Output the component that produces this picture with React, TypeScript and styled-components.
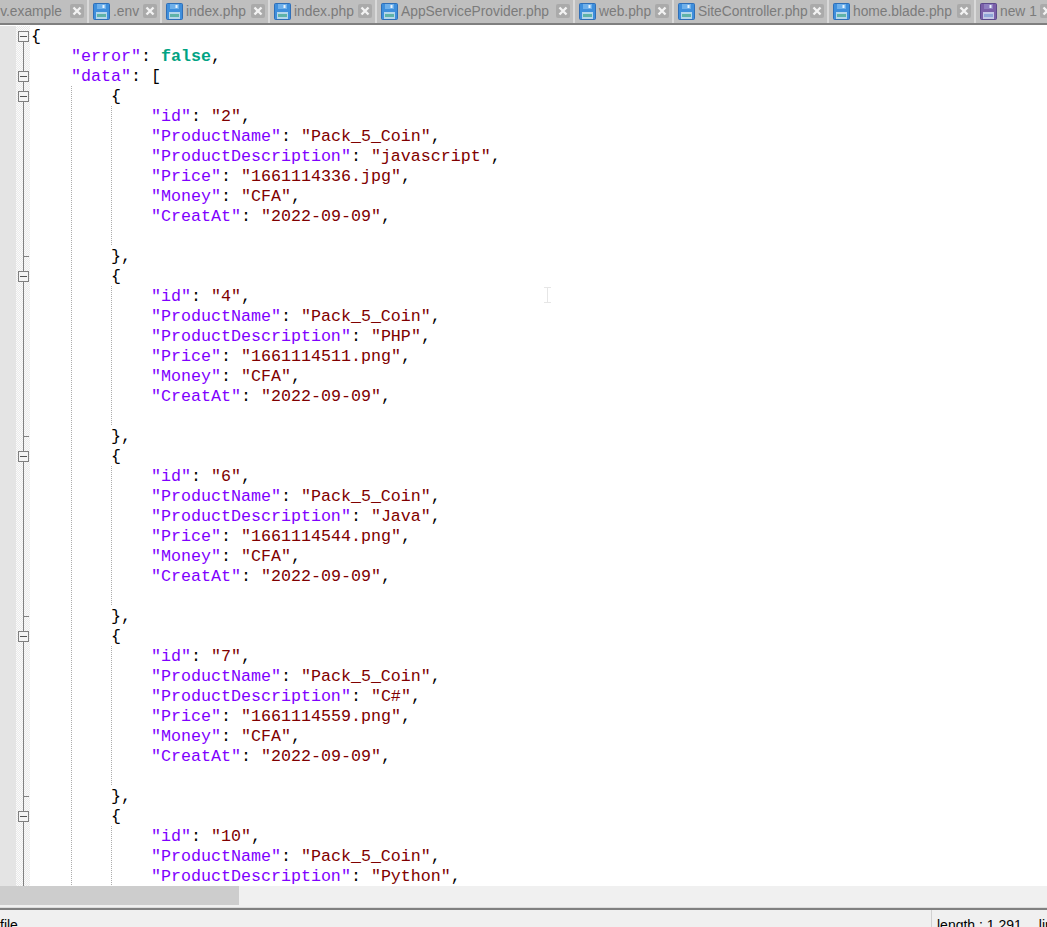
import {FC} from "react";
import styled, {createGlobalStyle} from "styled-components";

const GlobalStyle = createGlobalStyle`
	html,
	body {
		margin: 0;
		padding: 0;
		height: 100%;
		overflow: hidden;
		background: #fff;
	}
`;

const Shell = styled.div`
	display: flex;
	flex-direction: column;
	height: 927px;
	overflow: hidden;
	font-family: "Liberation Sans", Arial, sans-serif;
`;

const TabBar = styled.div`
	display: flex;
	flex: none;
	height: 23px;
	background: #bfbfbf;
	border-bottom: 2px solid #7f7f7f;
	overflow: hidden;
`;

const TabLabel = styled.span`
	flex: 1 1 auto;
	min-width: 0;
	margin-top: 2px;
	margin-left: 3px;
	font-size: 13.8px;
	line-height: 16px;
	color: #7b7b7b;
	white-space: nowrap;
`;

const Tab = styled.div<{$width: number; $clipped?: boolean}>`
	display: flex;
	flex: none;
	align-items: center;
	justify-content: ${(p) => (p.$clipped ? "flex-end" : "flex-start")};
	box-sizing: border-box;
	width: ${(p) => p.$width}px;
	height: 23px;
	padding: 0 3px 1px 4px;
	border-right: 2px solid #d9d9d9;
	overflow: ${(p) => (p.$clipped ? "hidden" : "visible")};

	${TabLabel} {
		flex-shrink: ${(p) => (p.$clipped ? 0 : 1)};
		padding-right: ${(p) => (p.$clipped ? 8 : 0)}px;
	}
`;

const FloppyIcon: FC<{unsaved?: boolean}> = ({unsaved}) => {
	const body = unsaved ? "#7a5fa8" : "#3f8fdc";
	const edge = unsaved ? "#5c4a8c" : "#2f6fb8";
	const shutter = unsaved ? "#8f7fc0" : "#6fb0ea";
	const plate = unsaved ? "#c4c8e6" : "#b4d6ea";
	const label = unsaved ? "#8fa6d8" : "#5fb3a8";
	return (
		<svg width="17" height="17" viewBox="0 0 17 17" style={{flex: "none"}}>
			<rect x="0.5" y="0.5" width="16" height="16" rx="1" fill={body} stroke={edge} />
			<rect x="4" y="1" width="9" height="5" fill={shutter} />
			<rect x="9.5" y="2" width="2" height="3" fill="#e8f2fb" />
			<rect x="3" y="9" width="11" height="7" fill={plate} />
			<rect x="4" y="11" width="9" height="3" fill={label} />
		</svg>
	);
};

const CloseIcon: FC = () => (
	<svg width="14" height="14" viewBox="0 0 14 14" style={{flex: "none"}}>
		<rect width="14" height="14" rx="2" fill="#aaaaaa" />
		<path d="M3.5 3.5l7 7M10.5 3.5l-7 7" stroke="#f2f2f2" strokeWidth="2.4" />
	</svg>
);

const Editor = styled.div`
	flex: 1;
	min-height: 0;
	padding-top: 1px;
	overflow: hidden;
	position: relative;
`;

const Row = styled.div`
	display: grid;
	grid-template-columns: 16px 14px 1fr;
	height: 20px;
`;

const LineMargin = styled.div`
	background: #e4e4e4;
`;

const FoldMargin = styled.div`
	background-image: conic-gradient(#e9e9e9 25%, #fbfbfb 0 50%, #e9e9e9 0 75%, #fbfbfb 0);
	background-size: 2px 2px;
`;

const Code = styled.pre<{$guides: number[]}>`
	margin: 0;
	padding: 1px 0 0 1px;
	font-family: "Liberation Mono", "Courier New", monospace;
	font-size: 16.67px;
	line-height: 19px;
	color: #000;
	white-space: pre;
	background-image: ${(p) =>
		p.$guides.length
			? p.$guides.map(() => "linear-gradient(#adadad 50%, transparent 50%)").join(",")
			: "none"};
	background-size: 1px 2px;
	background-repeat: repeat-y;
	background-position: ${(p) => p.$guides.map((x) => `${x}px 0`).join(",") || "0 0"};
`;

const Token = styled.span<{$kind: "key" | "str" | "bool"}>`
	color: ${(p) => ({key: "#8000ff", str: "#800000", bool: "#00a383"})[p.$kind]};
	font-weight: ${(p) => (p.$kind === "bool" ? 700 : 400)};
`;

const Cursor = styled.svg`
	position: absolute;
	left: 544px;
	top: 262px;
`;

const ScrollBar = styled.div`
	flex: none;
	height: 19px;
	background: #f0f0f0;
`;

const ScrollThumb = styled.div`
	width: 239px;
	height: 100%;
	background: #cdcdcd;
`;

const StatusBar = styled.div`
	flex: none;
	box-sizing: border-box;
	height: 22px;
	padding-top: 2px;
	background: #f0f0f0;
	overflow: hidden;
`;

const StatusRule = styled.div`
	height: 1px;
	background: #dcdcdc;
`;

const StatusInner = styled.div`
	display: flex;
	border-top: 2px solid #808080;
	font-size: 14px;
	line-height: 16px;
	color: #000;
	white-space: nowrap;
`;

const StatusCell = styled.div<{$grow?: boolean}>`
	display: flex;
	gap: 17px;
	flex: ${(p) => (p.$grow ? 1 : "none")};
	height: 15px;
	padding-top: 7px;
	padding-left: ${(p) => (p.$grow ? 0 : 5)}px;
	width: ${(p) => (p.$grow ? "auto" : "110px")};
	border-left: ${(p) => (p.$grow ? "none" : "1px solid #d0d0d0")};
`;

const tabs = [
	{name: ".env.example", width: 89, clipped: true},
	{name: ".env", width: 73},
	{name: "index.php", width: 108},
	{name: "index.php", width: 107},
	{name: "AppServiceProvider.php", width: 198},
	{name: "web.php", width: 99},
	{name: "SiteController.php", width: 155},
	{name: "home.blade.php", width: 147},
	{name: "new 1", width: 83, unsaved: true},
];

const products = [
	{id: "2", desc: "javascript", price: "1661114336.jpg"},
	{id: "4", desc: "PHP", price: "1661114511.png"},
	{id: "6", desc: "Java", price: "1661114544.png"},
	{id: "7", desc: "C#", price: "1661114559.png"},
	{id: "10", desc: "Python", price: ""},
];

// rows that fit above the horizontal scrollbar
const VISIBLE_ROWS = 43;

type Fold = "first" | "box" | "line" | "end";

interface ILine {
	fold: Fold;
	guides: number[];
	content: React.ReactNode;
}

const field = (key: string, value: string) => (
	<>
		{"            "}
		<Token $kind="key">"{key}"</Token>: <Token $kind="str">"{value}"</Token>,
	</>
);

const buildLines = (): ILine[] => {
	const lines: ILine[] = [
		{fold: "first", guides: [], content: "{"},
		{
			fold: "line",
			guides: [],
			content: (
				<>
					{"    "}
					<Token $kind="key">"error"</Token>: <Token $kind="bool">false</Token>,
				</>
			),
		},
		{
			fold: "box",
			guides: [],
			content: (
				<>
					{"    "}
					<Token $kind="key">"data"</Token>: [
				</>
			),
		},
	];
	products.forEach((p) => {
		const inner = [41, 81];
		lines.push({fold: "box", guides: [41], content: "        {"});
		lines.push({fold: "line", guides: inner, content: field("id", p.id)});
		lines.push({fold: "line", guides: inner, content: field("ProductName", "Pack_5_Coin")});
		lines.push({fold: "line", guides: inner, content: field("ProductDescription", p.desc)});
		lines.push({fold: "line", guides: inner, content: field("Price", p.price)});
		lines.push({fold: "line", guides: inner, content: field("Money", "CFA")});
		lines.push({fold: "line", guides: inner, content: field("CreatAt", "2022-09-09")});
		lines.push({fold: "line", guides: inner, content: " "});
		lines.push({fold: "end", guides: [41], content: "        },"});
	});
	return lines.slice(0, VISIBLE_ROWS);
};

const FoldMark: FC<{fold: Fold}> = ({fold}) => (
	<svg width="14" height="20" viewBox="0 0 14 20" style={{display: "block"}}>
		<path d={fold === "first" ? "M7.5 16V20" : "M7.5 0V20"} stroke="#808080" fill="none" />
		{fold === "end" && <path d="M7.5 10.5H13" stroke="#808080" />}
		{(fold === "first" || fold === "box") && (
			<>
				<rect x="2.5" y="5.5" width="10" height="10" fill="#f4f4f4" stroke="#808080" />
				<path d="M4 10.5H11" stroke="#555555" />
			</>
		)}
	</svg>
);

export default function App() {
	return (
		<Shell>
			<GlobalStyle />
			<TabBar>
				{tabs.map((t, i) => (
					<Tab key={i} $width={t.width} $clipped={t.clipped}>
						<FloppyIcon unsaved={t.unsaved} />
						<TabLabel>{t.name}</TabLabel>
						<CloseIcon />
					</Tab>
				))}
			</TabBar>
			<Editor>
				{buildLines().map((line, i) => (
					<Row key={i}>
						<LineMargin />
						<FoldMargin>
							<FoldMark fold={line.fold} />
						</FoldMargin>
						<Code $guides={line.guides}>{line.content}</Code>
					</Row>
				))}
				<Cursor width="7" height="16" viewBox="0 0 7 16">
					<path d="M0 .5H7M0 15.5H7M3.5 0V16" stroke="#e6e6e6" fill="none" />
				</Cursor>
			</Editor>
			<ScrollBar>
				<ScrollThumb />
			</ScrollBar>
			<StatusBar>
				<StatusRule />
				<StatusInner>
					<StatusCell $grow>file</StatusCell>
					<StatusCell>
						<span>length : 1,291</span>
						<span>lines : 50</span>
					</StatusCell>
				</StatusInner>
			</StatusBar>
		</Shell>
	);
}
